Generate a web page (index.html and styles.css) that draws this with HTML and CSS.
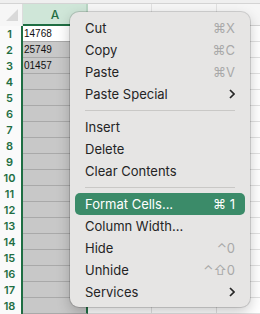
FILE: index.html
```html
<html>

<head>
    <meta charset="utf-8" />
    <title>format cells</title>
    <link rel="stylesheet" href="styles.css">
</head>

<body>
    <div class="sheet">
        <div class="strip"></div>
        <div class="row head">
            <div class="num corner">
                <svg width="14" height="14" viewBox="0 0 14 14"><path d="M13 1 L13 13 L1 13 Z" fill="#d9d9d9" /></svg>
            </div>
            <div class="cell col-a">A</div>
            <div class="cell"></div>
            <div class="cell"></div>
            <div class="cell"></div>
        </div>
        <div class="row"><div class="num">1</div><div class="cell col-a active">14768</div><div class="cell"></div><div class="cell"></div><div class="cell"></div></div>
        <div class="row"><div class="num">2</div><div class="cell col-a">25749</div><div class="cell"></div><div class="cell"></div><div class="cell"></div></div>
        <div class="row"><div class="num">3</div><div class="cell col-a">01457</div><div class="cell"></div><div class="cell"></div><div class="cell"></div></div>
        <div class="row"><div class="num">4</div><div class="cell col-a"></div><div class="cell"></div><div class="cell"></div><div class="cell"></div></div>
        <div class="row"><div class="num">5</div><div class="cell col-a"></div><div class="cell"></div><div class="cell"></div><div class="cell"></div></div>
        <div class="row"><div class="num">6</div><div class="cell col-a"></div><div class="cell"></div><div class="cell"></div><div class="cell"></div></div>
        <div class="row"><div class="num">7</div><div class="cell col-a"></div><div class="cell"></div><div class="cell"></div><div class="cell"></div></div>
        <div class="row"><div class="num">8</div><div class="cell col-a"></div><div class="cell"></div><div class="cell"></div><div class="cell"></div></div>
        <div class="row"><div class="num">9</div><div class="cell col-a"></div><div class="cell"></div><div class="cell"></div><div class="cell"></div></div>
        <div class="row"><div class="num">10</div><div class="cell col-a"></div><div class="cell"></div><div class="cell"></div><div class="cell"></div></div>
        <div class="row"><div class="num">11</div><div class="cell col-a"></div><div class="cell"></div><div class="cell"></div><div class="cell"></div></div>
        <div class="row"><div class="num">12</div><div class="cell col-a"></div><div class="cell"></div><div class="cell"></div><div class="cell"></div></div>
        <div class="row"><div class="num">13</div><div class="cell col-a"></div><div class="cell"></div><div class="cell"></div><div class="cell"></div></div>
        <div class="row"><div class="num">14</div><div class="cell col-a"></div><div class="cell"></div><div class="cell"></div><div class="cell"></div></div>
        <div class="row"><div class="num">15</div><div class="cell col-a"></div><div class="cell"></div><div class="cell"></div><div class="cell"></div></div>
        <div class="row"><div class="num">16</div><div class="cell col-a"></div><div class="cell"></div><div class="cell"></div><div class="cell"></div></div>
        <div class="row"><div class="num">17</div><div class="cell col-a"></div><div class="cell"></div><div class="cell"></div><div class="cell"></div></div>
        <div class="row"><div class="num">18</div><div class="cell col-a"></div><div class="cell"></div><div class="cell"></div><div class="cell"></div></div>
    </div>

    <div class="menu">
        <div class="item"><span>Cut</span><span class="key">⌘X</span></div>
        <div class="item"><span>Copy</span><span class="key">⌘C</span></div>
        <div class="item"><span>Paste</span><span class="key">⌘V</span></div>
        <div class="item"><span>Paste Special</span>
            <svg class="chev" width="6" height="10" viewBox="0 0 6 10"><path d="M1 1 L5 5 L1 9" /></svg>
        </div>
        <div class="sep"></div>
        <div class="item"><span>Insert</span></div>
        <div class="item"><span>Delete</span></div>
        <div class="item"><span>Clear Contents</span></div>
        <div class="sep"></div>
        <div class="item selected"><span>Format Cells...</span><span class="key">⌘ 1</span></div>
        <div class="item"><span>Column Width...</span></div>
        <div class="item"><span>Hide</span><span class="key">⌃0</span></div>
        <div class="item"><span>Unhide</span><span class="key">⌃⇧0</span></div>
        <div class="item"><span>Services</span>
            <svg class="chev" width="6" height="10" viewBox="0 0 6 10"><path d="M1 1 L5 5 L1 9" /></svg>
        </div>
    </div>
</body>

</html>
```

FILE: styles.css
```css
* {
    margin: 0;
    padding: 0;
    box-sizing: border-box;
}

body {
    position: relative;
    width: 260px;
    height: 314px;
    overflow: hidden;
    background: #fff;
    font-family: Inter, "Liberation Sans", sans-serif;
}

/* sheet */
.sheet {
    width: 260px;
    overflow: hidden;
}

.strip {
    height: 4px;
    background: #efefef;
    border-bottom: 1px solid #d4d4d4;
}

.row {
    display: flex;
    height: 16px;
}

.num {
    flex: none;
    width: 23px;
    background: #fafafa;
    border-right: 2px solid #1f6e43;
    color: #1f6e43;
    font-size: 11px;
    font-weight: 600;
    line-height: 16px;
    text-align: center;
    padding-right: 2px;
}

.cell {
    flex: none;
    width: 65px;
    border-right: 1px solid #e1e1e1;
    border-bottom: 1px solid #e1e1e1;
    font-family: "Liberation Sans", sans-serif;
    font-size: 10px;
    line-height: 15px;
    padding-left: 1px;
    color: #111;
}

.row .cell:nth-child(3) {
    width: 64px;
}

.row .cell:last-child {
    flex: 1;
    width: auto;
    border-right: 0;
}

.col-a {
    background: #c8c8c8;
    border-right: 2px solid #1f6e43;
    border-bottom-color: #a9a9a9;
}

.col-a.active {
    background: #fff;
}

.head {
    height: 22px;
}

.head .num {
    border-right: 1px solid #dcdcdc;
    background: #f6f6f6;
    display: flex;
    align-items: flex-end;
    justify-content: flex-end;
    padding: 0 3px 4px 0;
}

.head .cell {
    background: #f6f6f6;
    border-bottom: 1px solid #d4d4d4;
    text-align: center;
    font-family: Inter, "Liberation Sans", sans-serif;
    font-size: 12px;
    line-height: 21px;
    color: #555;
}

.head .col-a {
    background: #cfe6d8;
    border-bottom: 2px solid #1f6e43;
    border-right-color: #b9d6c4;
    color: #1f6e43;
    font-weight: 500;
}

/* context menu */
.menu {
    position: absolute;
    left: 70px;
    top: 12px;
    width: 180px;
    padding: 5px 5px 4px;
    background: #e6e5e4;
    border-radius: 9px;
    box-shadow: 0 0 0 1px rgba(0, 0, 0, 0.14), 0 5px 14px rgba(0, 0, 0, 0.22);
}

.item {
    display: flex;
    justify-content: space-between;
    align-items: center;
    height: 22px;
    padding: 0 10px;
    border-radius: 5px;
    font-size: 13px;
    color: #242424;
}

.key {
    color: #a9a9a9;
    font-size: 13px;
}

.chev {
    fill: none;
    stroke: #262626;
    stroke-width: 1.7;
}

.selected {
    background: #3b8b69;
    color: #fff;
}

.selected .key {
    color: #fff;
}

.sep {
    height: 1px;
    margin: 5px 10px;
    background: #c9c8c6;
}
```
